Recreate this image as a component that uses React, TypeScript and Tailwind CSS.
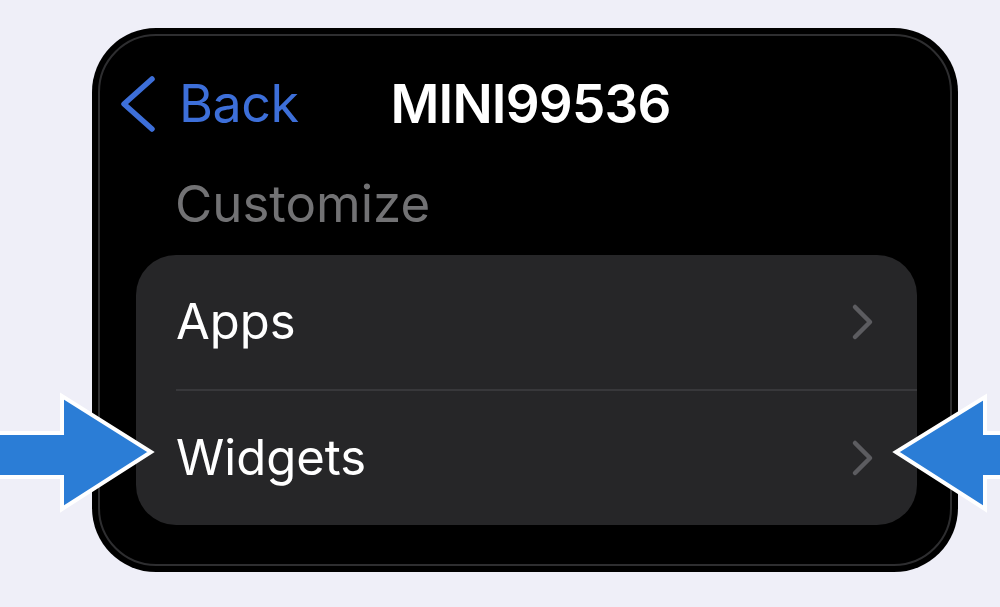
import { ReactNode } from "react";

const RowChevron = () => (
  <svg width="24" height="38" viewBox="0 0 24 38" className="shrink-0">
    <path d="M4 4 L19 19 L4 34" fill="none" stroke="#5c5c60" strokeWidth="4.5" strokeLinecap="round" strokeLinejoin="round" />
  </svg>
);

const Row = ({ children }: { children: ReactNode }) => (
  <div className="flex h-[134px] items-center justify-between pl-[40px] pr-[42px]">
    <span className="text-[49px] leading-[50px] text-white">{children}</span>
    <RowChevron />
  </div>
);

export default function App() {
  return (
    <div className="relative h-[607px] w-[1000px] overflow-hidden bg-[#efeff8] font-['Inter',sans-serif]">
      <div className="ml-[92px] pt-[28px]">
        {/* phone frame */}
        <div className="h-[544px] w-[866px] rounded-[64px] bg-black p-[6px]">
          <div className="h-full rounded-[58px] border-2 border-[#2e2e30]">
            {/* nav bar */}
            <div className="mt-[41px] flex h-[54px] items-center pl-[19px]">
              <svg width="38" height="58" viewBox="0 0 38 58" className="shrink-0">
                <path d="M33 4 L5 29 L33 54" fill="none" stroke="#3d6fd9" strokeWidth="5.5" strokeLinecap="round" strokeLinejoin="round" />
              </svg>
              <span className="ml-[22px] text-[52px] leading-[54px] tracking-[-0.5px] text-[#3d6fd9]">Back</span>
              <span className="ml-[92px] text-[53px] font-semibold leading-[54px] tracking-[-0.8px] text-white">MINI99536</span>
            </div>

            <div className="mt-[47px] pl-[75px] text-[51px] leading-[52px] text-[#727274]">Customize</div>

            {/* list card */}
            <div className="ml-[36px] mt-[25px] w-[781px] overflow-hidden rounded-[40px] bg-[#262628]">
              <Row>Apps</Row>
              <div className="ml-[40px] h-[2px] bg-[#38383b]"></div>
              <Row>Widgets</Row>
            </div>
          </div>
        </div>
      </div>

      {/* pointer arrows */}
      <svg className="absolute left-0 top-0" width="1000" height="607" viewBox="0 0 1000 607">
        <polygon
          points="-10,433 62,433 62,396 151,452 62,509 62,477 -10,477"
          fill="#2b7dd6"
          stroke="#ffffff"
          strokeWidth="4"
          strokeLinejoin="miter"
        />
        <polygon
          points="1010,433 985,433 985,397 896,452 985,509 985,477 1010,477"
          fill="#2b7dd6"
          stroke="#ffffff"
          strokeWidth="4"
          strokeLinejoin="miter"
        />
      </svg>
    </div>
  );
}
